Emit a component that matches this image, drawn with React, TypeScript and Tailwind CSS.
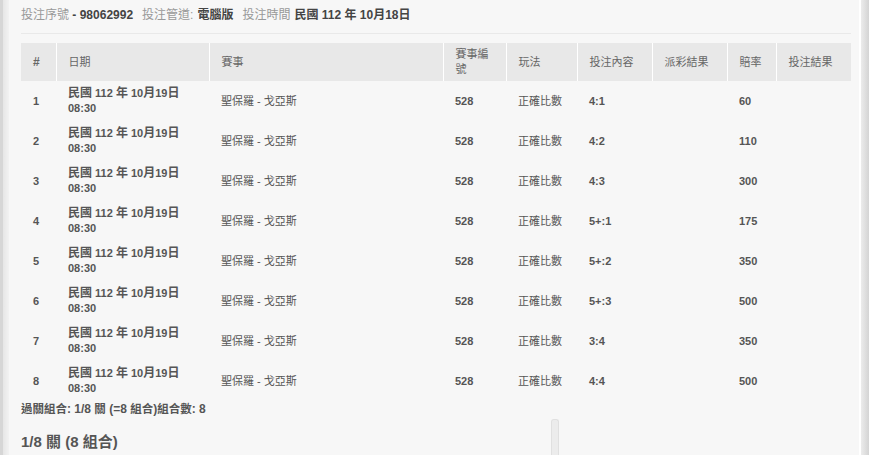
import React from "react";

const rows = [
  { n: 1, c: "4:1", o: "60" },
  { n: 2, c: "4:2", o: "110" },
  { n: 3, c: "4:3", o: "300" },
  { n: 4, c: "5+:1", o: "175" },
  { n: 5, c: "5+:2", o: "350" },
  { n: 6, c: "5+:3", o: "500" },
  { n: 7, c: "3:4", o: "350" },
  { n: 8, c: "4:4", o: "500" },
];

function T({ s, cls }: { s: string; cls: string }) {
  const parts = s.split(/([\u3000-\u9fff\uff00-\uffef]+)/);
  return (
    <>
      {parts.map((p, i) =>
        /[\u3000-\u9fff\uff00-\uffef]/.test(p) ? (
          <span key={i} className={cls}>
            {p}
          </span>
        ) : (
          <React.Fragment key={i}>{p}</React.Fragment>
        )
      )}
    </>
  );
}

const cols: { label: string; w: string }[] = [
  { label: "#", w: "w-[35px]" },
  { label: "日期", w: "w-[153px]" },
  { label: "賽事", w: "w-[234px]" },
  { label: "賽事編號", w: "w-[63px]" },
  { label: "玩法", w: "w-[71px]" },
  { label: "投注內容", w: "w-[75px]" },
  { label: "派彩結果", w: "w-[75px]" },
  { label: "賠率", w: "w-[49px]" },
  { label: "投注結果", w: "w-[75px]" },
];

const td = "pl-[12px] pr-[4px] py-[5px] align-middle text-[11px] leading-[15px] whitespace-nowrap";

export default function App() {
  return (
    <div
      className="flex h-[455px] w-[869px] overflow-hidden bg-[#f7f7f7] text-[12px] text-[#555]"
      style={{ fontFamily: '"Liberation Sans", "Noto Sans CJK TC", sans-serif' }}
    >
      <div className="flex w-[9px] shrink-0">
        <div className="w-[3px] bg-[#d6d6d6]" />
        <div className="w-[6px] bg-gradient-to-r from-[#e6e6e6] to-[#f2f2f2]" />
      </div>
      <div className="flex-1 pl-[12px] pr-[8px]">
        <div className="border-b border-[#e9e9e9] pt-[8px] pb-[10px] leading-[15px]">
          <span className="text-[#999]">投注序號</span>
          <span className="font-bold text-[#444]"> - 98062992</span>
          <span className="ml-[9px] text-[#999]">投注管道:</span>
          <span className="ml-[4px] font-bold text-[#444]">電腦版</span>
          <span className="ml-[9px] text-[#999]">投注時間</span>
          <span className="ml-[4px] font-bold text-[#444]">民國 112 年 10月18日</span>
        </div>
        <table className="mt-[9px] w-[830px] table-fixed border-collapse">
          <thead>
            <tr className="bg-[#e8e8e8]">
              {cols.map((c, i) => (
                <th
                  key={c.label}
                  className={`${c.w} h-[38px] pl-[12px] pr-[8px] py-0 text-left align-middle leading-[15px] text-[#666] ${
                    i > 0 ? "border-l border-white font-normal" : "font-bold"
                  }`}
                >
                  <T s={c.label} cls="text-[11px]" />
                </th>
              ))}
            </tr>
          </thead>
          <tbody>
            {rows.map((r) => (
              <tr key={r.n} className="h-[40px]">
                <td className={`${td} font-bold`}>{r.n}</td>
                <td className={`${td} font-bold`}>
                  <T s="民國 112 年 10月19日" cls="text-[12px]" />
                  <br />
                  08:30
                </td>
                <td className={td}>聖保羅 - 戈亞斯</td>
                <td className={`${td} font-bold`}>528</td>
                <td className={td}>正確比數</td>
                <td className={`${td} font-bold`}>{r.c}</td>
                <td className={td}></td>
                <td className={`${td} font-bold`}>{r.o}</td>
                <td className={td}></td>
              </tr>
            ))}
          </tbody>
        </table>
        <div className="mt-[1px] font-bold leading-[15px]">
          <T s="過關組合: 1/8 關 (=8 組合)組合數: 8" cls="text-[11.5px]" />
        </div>
        <div className="flex">
          <div className="w-[530px] pt-[15px] text-[15px] font-bold leading-[20px] text-[#555]">
            1/8 關 (8 組合)
          </div>
          <div className="mt-[2px] h-[60px] w-[8px] rounded-t-[3px] border-x border-t border-[#e0e0e0] bg-[#ececec]" />
        </div>
      </div>
      <div className="flex w-[10px] shrink-0">
        <div className="w-[2px] bg-white" />
        <div className="w-[8px] bg-gradient-to-r from-[#ececec] to-[#d4d4d4]" />
      </div>
    </div>
  );
}
